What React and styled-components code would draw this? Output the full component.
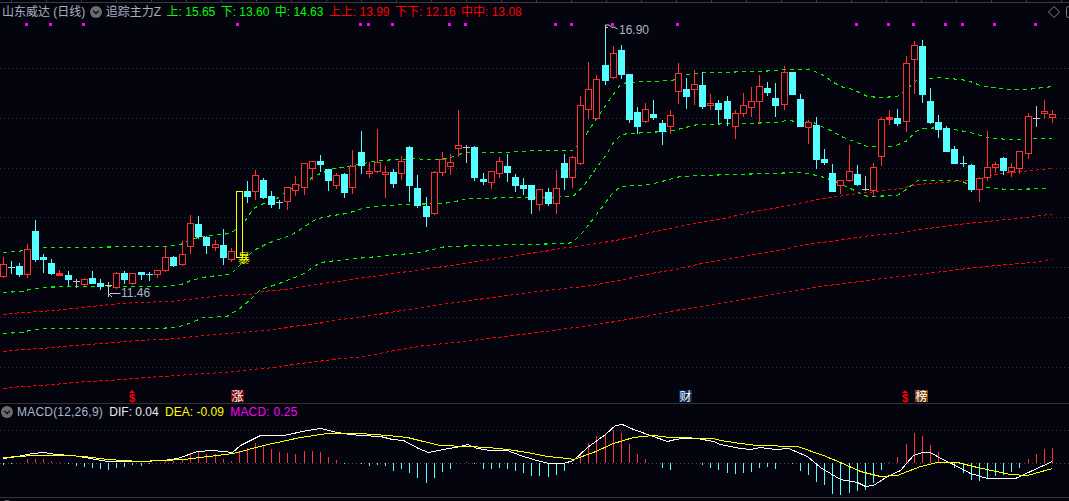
import React from "react";
import styled, { createGlobalStyle } from "styled-components";

const BG = "#04040e";
const RED = "#ff3232";
const CYAN = "#54ffff";
const SANS = `"Liberation Sans", "Noto Sans CJK SC", sans-serif`;

const Global = createGlobalStyle`
  html, body { margin: 0; padding: 0; background: ${BG}; }
  body { font-family: ${SANS}; font-size: 12px; }
`;

const Root = styled.div`
  position: relative;
  width: 1069px;
  height: 501px;
  overflow: hidden;
  display: flex;
  flex-direction: column;
  background: ${BG};
`;
const TopStrip = styled.div`
  flex: none;
  height: 2px;
  border-bottom: 1px solid #3a3a3a;
  background-image: linear-gradient(90deg, #3a3a3a 1px, transparent 1px);
  background-size: 35px 100%;
  background-position: 11px 0;
`;
const Legend = styled.div`
  flex: none;
  height: 18px;
  display: flex;
  align-items: center;
  padding-left: 2px;
  white-space: nowrap;
  line-height: 18px;
`;
const LegendItem = styled.span`
  color: ${(p) => p.$color};
  margin-right: ${(p) => p.$gap ?? 5.4}px;
`;
const ToolGroup = styled.div`
  margin-left: auto;
  margin-right: -9px;
  display: flex;
  align-items: center;
  gap: 6px;
`;
const CollapseIcon = styled.svg`
  flex: none;
  width: 12px;
  height: 12px;
  margin: ${(p) => p.$margin};
`;
const MainPane = styled.div`
  flex: none;
  position: relative;
  height: 382px;
`;
const ChartSvg = styled.svg`
  display: block;
  width: 1069px;
  height: ${(p) => p.$h}px;
`;
const PriceTag = styled.span`
  position: absolute;
  left: ${(p) => p.$x}px;
  top: ${(p) => p.$y - 21}px;
  color: #a9b6c6;
  font-size: 12px;
  line-height: 14px;
`;
const SurgeGlyph = styled.span`
  position: absolute;
  left: 238px;
  top: ${251 - 21}px;
  color: #ffff00;
  font: 12px/13px "Noto Sans CJK SC", sans-serif;
`;
const NewsTag = styled.span`
  position: absolute;
  left: ${(p) => p.$x}px;
  top: ${390 - 21}px;
  width: 13px;
  height: 12px;
  text-align: center;
  background: ${(p) => p.$bg};
  color: #fff;
  font: 12px/12px "Noto Sans CJK SC", sans-serif;
`;
const DollarMark = styled.span`
  position: absolute;
  left: ${(p) => p.$x}px;
  top: ${391 - 21}px;
  width: 8px;
  height: 12px;
  color: #ff0000;
  font: bold 11px/14px "Liberation Sans", sans-serif;
  text-align: center;
  &::before {
    content: "";
    position: absolute;
    left: 1px;
    top: -1px;
    border-left: 3px solid transparent;
    border-right: 3px solid transparent;
    border-bottom: 3px solid #ff0000;
  }
`;
const MacdPane = styled.div`
  flex: none;
  height: 93px;
  border-top: 1px solid #333;
  display: flex;
  flex-direction: column;
`;
const MacdHeader = styled.div`
  flex: none;
  height: 16px;
  display: flex;
  align-items: center;
  white-space: nowrap;
  line-height: 16px;
  padding-left: 1px;
`;
const MacdLabel = styled.span`
  color: ${(p) => p.$color};
  margin-right: ${(p) => p.$gap}px;
  letter-spacing: ${(p) => p.$spread ?? 0}px;
`;
const BottomPane = styled.div`
  flex: 1;
  border-top: 1px solid #333;
  padding-left: 1px;
  padding-top: 2px;
  overflow: hidden;
`;

// x, kind, high, bodyTop, bodyBottom, low
const candles = [
  [3,"r",257,264,276,277],[11,"d",261,267,267,273],[19,"c",263,266,274,276],[27,"r",244,249,274,277],
  [35,"c",220,231,259,261],[43,"c",254,257,259,272],[51,"c",259,263,273,274],[59,"f",270,273,275,275],
  [68,"c",271,275,279,285],[76,"w",279,281,281,287],[84,"r",278,279,284,285],[92,"c",271,278,283,283],
  [100,"c",279,283,286,289],[108,"w",282,285,285,296],[116,"r",272,273,287,288],[124,"c",271,273,279,283],
  [132,"r",273,273,283,284],[141,"c",272,272,274,279],[149,"d",272,274,274,280],[157,"r",270,270,274,277],
  [165,"r",247,257,270,271],[173,"c",256,257,265,266],[182,"r",241,254,264,265],[190,"r",215,223,246,253],
  [198,"c",216,224,236,238],[206,"c",236,237,245,253],[215,"r",240,244,247,250],[223,"c",229,245,257,264],
  [231,"r",248,251,259,261],[239,"y",191,191,257,257],[247,"c",181,191,196,202],[255,"r",170,175,191,199],
  [263,"c",178,180,197,198],[271,"c",191,196,204,207],[279,"d",200,202,202,208],[287,"r",187,187,201,209],
  [295,"r",176,184,190,195],[304,"r",163,163,187,194],[312,"r",161,161,168,179],[320,"c",155,161,164,171],
  [328,"c",169,169,180,190],[336,"r",173,175,185,188],[344,"c",173,174,192,197],[352,"r",150,166,187,193],
  [361,"c",131,152,165,173],[369,"r",162,171,173,177],[377,"r",129,162,171,172],[385,"r",166,172,174,197],
  [393,"c",169,172,183,187],[401,"r",156,161,173,179],[409,"c",146,147,185,201],[417,"c",175,188,205,207],
  [426,"c",197,206,216,226],[434,"r",171,172,213,214],[442,"r",152,159,172,175],[450,"r",154,162,166,174],
  [458,"r",110,145,148,156],[466,"w",145,147,147,162],[474,"c",146,147,177,180],[483,"c",173,179,181,184],
  [491,"r",171,171,182,188],[499,"r",157,161,173,177],[507,"c",154,166,172,181],[515,"c",174,177,185,191],
  [523,"c",178,185,188,194],[531,"c",185,185,199,213],[539,"r",189,189,204,210],[548,"c",188,192,203,205],
  [556,"r",170,188,203,213],[564,"c",154,163,177,189],[572,"r",156,157,177,187],[580,"r",96,105,163,164],
  [588,"r",62,89,109,118],[596,"r",75,79,118,119],[605,"c",25,65,80,84],[613,"r",46,53,77,78],
  [621,"c",45,50,74,78],[629,"c",74,74,119,122],[637,"c",107,112,126,133],[645,"r",103,109,121,122],
  [653,"c",100,114,117,119],[662,"c",120,123,131,144],[670,"r",110,115,126,133],[678,"r",63,73,91,103],
  [686,"c",78,89,96,108],[694,"r",70,84,89,104],[702,"c",72,85,106,108],[710,"r",94,103,105,109],
  [718,"c",100,103,109,123],[727,"c",96,101,118,125],[735,"r",110,113,126,138],[743,"r",93,105,113,116],
  [751,"r",87,101,107,116],[759,"r",75,86,101,123],[767,"c",82,88,92,95],[775,"c",83,98,105,116],
  [784,"r",66,72,104,109],[792,"c",72,72,94,94],[800,"c",94,99,126,126],[808,"r",120,122,127,143],
  [816,"c",117,125,159,168],[824,"c",149,159,162,164],[832,"c",164,173,191,191],[840,"r",180,180,185,193],
  [849,"r",145,171,180,181],[857,"c",165,174,184,185],[865,"w",176,189,189,190],[873,"r",163,167,190,195],
  [881,"r",117,119,156,165],[889,"f",110,117,119,124],[897,"c",109,118,123,125],[906,"r",56,63,121,131],
  [914,"r",41,45,59,93],[922,"c",40,46,94,102],[930,"c",88,101,122,123],[938,"c",115,122,129,137],
  [946,"c",126,128,151,151],[954,"c",146,149,163,163],[963,"d",156,163,163,166],[971,"c",164,165,189,191],
  [979,"r",178,178,189,201],[987,"r",131,167,177,180],[995,"r",162,164,167,172],[1003,"c",157,158,170,174],
  [1011,"r",163,167,171,176],[1019,"r",151,151,168,173],[1028,"r",113,116,153,158],[1036,"w",106,118,118,126],
  [1044,"r",100,111,113,118],[1052,"r",110,114,117,122],
];

const upper = [[3,252],[17,251],[28,249],[40,247],[57,247],[160,246],[177,245],[190,240],[200,236],[230,233],[238,227],[245,220],[253,208],[263,203],[270,201],[278,197],[290,188],[303,184],[313,176],[320,173],[333,168],[353,165],[368,162],[377,160],[400,159],[417,158],[422,159],[437,159],[450,157],[458,154],[467,152],[503,152],[518,151],[540,150],[572,150],[574,148],[580,143],[587,132],[595,120],[603,108],[612,95],[620,84],[627,82],[647,81],[672,80],[680,75],[693,73],[707,72],[760,71],[787,69],[810,69],[823,75],[833,82],[843,87],[853,89],[867,96],[880,97],[897,96],[907,88],[917,79],[940,77],[967,80],[980,85],[1007,89],[1027,89],[1052,86]];
const middle = [[3,292],[21,291],[29,289],[48,286.5],[160,286],[177,285],[184,283],[190,280],[207,276],[230,274],[238,266],[253,250],[267,243],[278,239],[290,235],[303,227],[313,220],[325,216],[347,213],[358,209],[373,206],[403,204],[443,203],[460,200],[467,198],[493,198],[497,197],[537,197],[572,196],[578,191],[584,184],[592,173],[597,166],[606,154],[613,142],[620,135],[627,133],[650,132],[673,130],[697,124],[780,122],[785,120],[813,122],[830,130],[843,137],[867,146],[893,146],[907,140],[915,131],[923,128],[943,127],[970,132],[987,137],[1007,139],[1052,138]];
const lower = [[3,333],[21,332],[29,330],[46,328],[160,328],[177,326.5],[186,324],[203,317],[226,316],[238,309],[250,299],[260,289],[279,283],[286,280],[300,275],[320,262],[345,259],[420,252],[445,246],[520,244],[568,243],[573,241],[583,231],[593,218],[603,205],[611,194],[620,186],[650,184],[680,176],[700,175],[800,172],[817,175],[833,180],[850,188],[867,196],[897,195],[907,188],[917,180],[960,180],[970,185],[1007,189],[1050,188]];
const red1 = [[3,314],[21,312],[41,311],[64,309],[86,306.5],[110,304],[136,302],[172,301],[203,297],[224,295],[251,294],[262,291],[286,289],[310,285],[337,281],[450,265],[543,251],[567,247],[597,243],[621,239],[645,233],[665,229],[688,224],[719,219],[749,212],[776,207.5],[813,200],[837,196],[857,193],[867,192],[900,188],[917,184],[967,180],[1000,173],[1052,168]];
const red2 = [[3,351],[21,349],[41,348],[64,346],[88,344],[114,342],[136,340],[160,339],[177,338],[203,335],[226,333],[251,331],[275,329],[293,326],[317,323],[341,319],[365,316],[389,312],[424,306.5],[455,302],[496,296.5],[537,291],[569,287.5],[592,285],[623,279],[651,273],[675,269],[699,263.5],[724,259],[749,255],[773,251],[796,246],[813,243],[844,239],[867,235.5],[894,233],[935,227],[958,224],[1006,219],[1026,217],[1052,213.5]];
const red3 = [[3,388],[21,386],[41,385],[64,383],[88,381],[114,379.5],[136,378],[160,376],[177,375],[203,373],[226,372],[251,369],[275,367],[293,364],[317,361],[341,358],[365,356],[389,351],[424,345],[455,342],[496,337],[537,332],[567,328],[597,324],[621,320],[645,316],[675,310],[712,304],[749,298],[776,293],[796,290],[820,286],[844,283],[867,280],[891,277],[935,272],[958,269],[1006,264],[1033,262],[1052,258.5]];

const dotsX = [26,50,83,237,360,368,392,449,465,555,571,612,677,856,888,913,945,962,994,1035];
const gridY = [68,118,168,217,267,317,367];

const macdBars = [[3,-2],[11,-1],[27,4],[35,4],[43,4],[51,2],[59,1],[68,-1],[76,-3],[84,-4],[92,-5],[100,-6],[108,-7],[116,-5],[124,-4],[132,-2],[141,-3],[149,-1],[165,2],[173,2],[182,4],[190,10],[198,11],[206,9],[215,9],[223,4],[231,2],[239,11],[247,15],[255,20],[263,17],[271,14],[279,11],[287,10],[295,9],[304,12],[312,12],[320,11],[328,6],[336,3],[344,-1],[361,-1],[369,-3],[377,-2],[385,-3],[393,-8],[401,-6],[409,-10],[417,-15],[426,-20],[434,-15],[442,-9],[450,-6],[466,1],[474,-1],[483,-6],[491,-6],[499,-5],[507,-6],[515,-8],[523,-10],[531,-13],[539,-13],[548,-14],[556,-12],[564,-8],[572,-1],[580,10],[588,20],[596,27],[605,29],[613,33],[621,30],[629,19],[637,9],[645,4],[662,-5],[670,-7],[702,-2],[710,-5],[718,-7],[727,-10],[735,-11],[743,-10],[751,-9],[759,-5],[767,-4],[775,-6],[792,-1],[800,-8],[808,-12],[816,-19],[824,-22],[832,-31],[840,-32],[849,-30],[857,-28],[865,-27],[873,-20],[881,-7],[889,1],[897,6],[906,19],[914,30],[922,27],[930,18],[938,11],[946,2],[954,-5],[963,-10],[971,-17],[979,-18],[987,-16],[995,-13],[1003,-12],[1011,-9],[1019,-5],[1028,4],[1036,9],[1044,14],[1052,15]];

const dif = [[3,459],[17,457],[32,454],[43,453],[55,455],[72,456],[90,459],[107,462],[137,462],[163,461],[177,459],[197,452],[213,451],[232,453],[240,446],[260,436],[283,436],[307,431],[320,429],[337,433],[350,435],[360,436],[380,437],[392,440],[403,441],[418,449],[428,453],[443,450],[460,447],[467,445],[477,449],[490,451],[507,451],[520,456],[533,460],[548,464],[563,464],[573,461],[587,448],[605,435],[615,426],[622,425],[633,430],[650,436],[667,442],[675,440],[683,439],[697,439],[713,442],[720,445],[740,449],[750,450],[760,448],[775,450],[788,449],[807,457],[820,468],[840,480],[857,483],[865,487],[873,486],[887,477],[900,471],[913,456],[922,453],[930,453],[942,460],[953,465],[970,474],[987,479],[1015,479],[1030,472],[1052,462]];
const dea = [[3,458],[33,456],[67,456],[83,457],[107,460],[140,462],[163,461],[183,460],[233,454],[263,446],[300,438],[327,434],[360,434],[387,436],[407,438],[423,442],[440,446],[467,447],[487,448],[507,450],[527,453],[547,457],[567,459],[573,460],[593,453],[613,444],[633,438],[653,436],[670,438],[713,439],[720,441],[740,444],[757,446],[797,447],[823,456],[840,463],[860,472],[880,477],[897,476],[920,467],[937,463],[957,463],[977,468],[1010,475],[1027,476],[1052,469]];

const pts = (a) => a.map(([x, y]) => `${x + 0.5},${y + 0.5}`).join(" ");

function Candle({ c }) {
  const [x, kind, hi, top, bot, lo] = c;
  const cx = x + 0.5;
  const color = { r: RED, f: RED, c: CYAN, d: CYAN, w: "#c4c4c4", y: "#ffff00" }[kind];
  const hollow = kind === "r" || kind === "y";
  const doji = kind === "d" || kind === "w";
  return (
    <g stroke={color} fill="none">
      <line x1={cx} x2={cx} y1={hi} y2={lo + 1} />
      {doji ? (
        <line x1={x - 3} x2={x + 4} y1={top + 0.5} y2={top + 0.5} />
      ) : hollow ? (
        <rect x={x - 2.5} y={top + 0.5} width={6} height={bot - top} fill={BG} />
      ) : (
        <rect x={x - 3} y={top} width={7} height={bot - top + 1} fill={color} stroke="none" />
      )}
    </g>
  );
}

function Collapse({ margin }) {
  return (
    <CollapseIcon $margin={margin} viewBox="0 0 12 12">
      <circle cx="6" cy="6" r="6" fill="#6b6b6b" />
      <polyline points="3.2,4.8 6,7.6 8.8,4.8" fill="none" stroke="#16161a" strokeWidth="1.5" />
    </CollapseIcon>
  );
}

export default function App() {
  return (
    <Root>
      <Global />
      <TopStrip />
      <Legend>
        <LegendItem $color="#a9b1bf" $gap={0}>山东威达 (日线)</LegendItem>
        <Collapse margin="0 3.5px 0 5px" />
        <LegendItem $color="#a9b1bf">追踪主力Z</LegendItem>
        <LegendItem $color="#00ff00">上: 15.65</LegendItem>
        <LegendItem $color="#00ff00">下: 13.60</LegendItem>
        <LegendItem $color="#00ff00">中: 14.63</LegendItem>
        <LegendItem $color="#ff0000">上上: 13.99</LegendItem>
        <LegendItem $color="#ff0000">下下: 12.16</LegendItem>
        <LegendItem $color="#ff0000">中中: 13.08</LegendItem>
        <ToolGroup>
          <svg width="12" height="12" viewBox="0 0 12 12">
            <polygon points="6,0.5 11.5,6 6,11.5 0.5,6" fill="none" stroke="#808080" />
          </svg>
          <svg width="12" height="12" viewBox="0 0 12 12">
            <rect x="0.5" y="0.5" width="11" height="11" rx="2" fill="none" stroke="#808080" />
          </svg>
        </ToolGroup>
      </Legend>

      <MainPane>
        <ChartSvg $h={382} viewBox="0 21 1069 382">
          {gridY.map((y) => (
            <line key={y} x1="0" x2="1069" y1={y + 0.5} y2={y + 0.5} stroke="#333" strokeDasharray="1 3" />
          ))}
          {dotsX.map((x) => (
            <rect key={x} x={x - 1} y="23" width="3" height="3" fill="#ff00ff" />
          ))}
          <g fill="none" shapeRendering="crispEdges">
            {[red1, red2, red3].map((l, i) => (
              <polyline key={i} points={pts(l)} stroke="#ff0000" strokeDasharray="3.5 2.5" />
            ))}
            {[upper, middle, lower].map((l, i) => (
              <polyline key={i} points={pts(l)} stroke="#00f500" strokeWidth="1.1" strokeDasharray="4 4" />
            ))}
          </g>
          <g shapeRendering="crispEdges">
            {candles.map((c) => (
              <Candle key={c[0]} c={c} />
            ))}
          </g>
          <g fill="none" stroke="#c8ccd4">
            <path d="M605.5 30V25H609L612 27.5L614 27L617.5 29" />
            <path d="M606 27.5H608" />
            <path d="M120.5 293.5H110M108.5 285V293.5L112 297" />
          </g>
        </ChartSvg>
        <PriceTag $x={619} $y={23}>16.90</PriceTag>
        <PriceTag $x={121} $y={286}>11.46</PriceTag>
        <SurgeGlyph>暴</SurgeGlyph>
        <DollarMark $x={128}>$</DollarMark>
        <NewsTag $x={231} $bg="#7a0505">涨</NewsTag>
        <NewsTag $x={679} $bg="#0b2c58">财</NewsTag>
        <DollarMark $x={901}>$</DollarMark>
        <NewsTag $x={915} $bg="#7a3f12">榜</NewsTag>
      </MainPane>

      <MacdPane>
        <MacdHeader>
          <Collapse margin="0 4px 0 0" />
          <MacdLabel $color="#a9b6c6" $gap={6.4} $spread={0.2}>MACD(12,26,9)</MacdLabel>
          <MacdLabel $color="#e8e8f0" $gap={6.4}>DIF: 0.04</MacdLabel>
          <MacdLabel $color="#ffff00" $gap={6.4}>DEA: -0.09</MacdLabel>
          <MacdLabel $color="#ff00ff" $gap={0} $spread={0.2}>MACD: 0.25</MacdLabel>
        </MacdHeader>
        <ChartSvg $h={76} viewBox="0 421 1069 76">
          <line x1="0" x2="1069" y1="431.5" y2="431.5" stroke="#333" strokeDasharray="1 3" />
          <line x1="0" x2="1069" y1="464.5" y2="464.5" stroke="#4a4a4a" strokeDasharray="1 3" />
          <g shapeRendering="crispEdges">
            {macdBars.map(([x, h]) => (
              <line
                key={x}
                x1={x + 0.5}
                x2={x + 0.5}
                y1={464}
                y2={464 - h}
                stroke={h > 0 ? RED : CYAN}
              />
            ))}
            <polyline points={pts(dif)} fill="none" stroke="#ffffff" />
            <polyline points={pts(dea)} fill="none" stroke="#ffff00" />
          </g>
        </ChartSvg>
      </MacdPane>

      <BottomPane>
        <Collapse margin="0" />
      </BottomPane>
    </Root>
  );
}
